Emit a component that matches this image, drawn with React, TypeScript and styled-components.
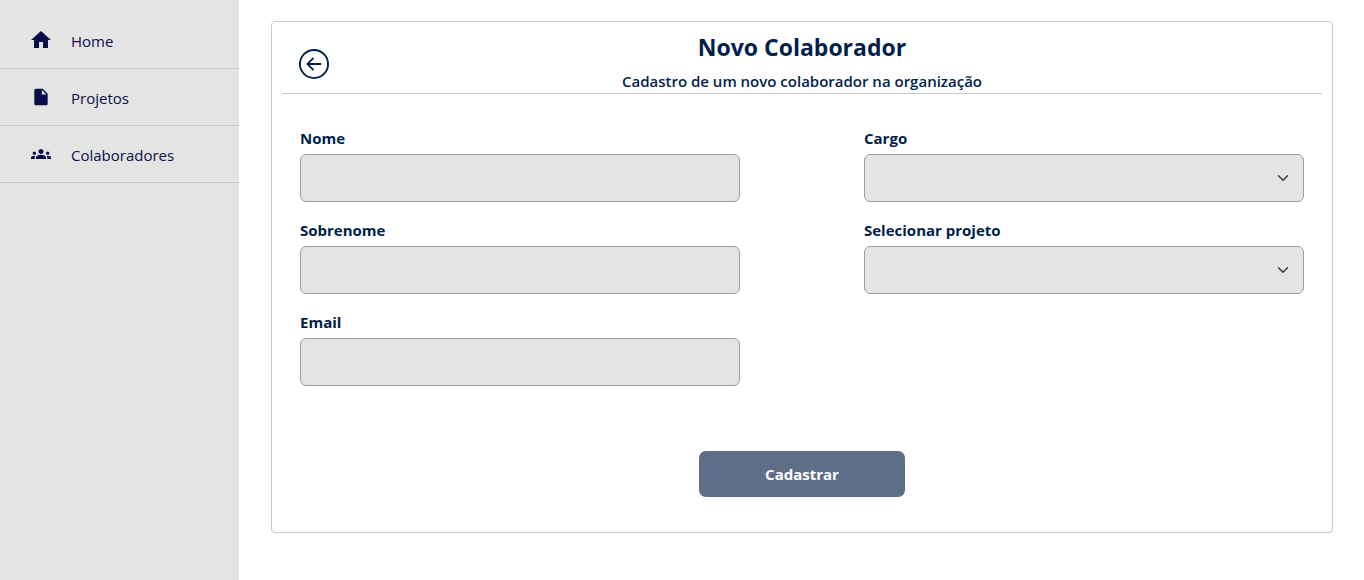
import React from 'react';
import styled, { createGlobalStyle } from 'styled-components';
import { MdHome, MdInsertDriveFile, MdGroups } from 'react-icons/md';
import { BsArrowLeftCircle } from 'react-icons/bs';

const GlobalStyle = createGlobalStyle`
  *, *::before, *::after { box-sizing: border-box; }
  body {
    margin: 0;
    background: #fff;
    color: #001f4c;
    font-family: "Segoe UI", "Open Sans", "Noto Sans", sans-serif;
    font-size: 15px;
    line-height: 24px;
  }
`;

const Page = styled.div`
  display: flex;
  min-height: 100vh;
`;

const Sidebar = styled.nav`
  flex: 0 0 239px;
  padding-top: 12px;
  background: #e4e4e4;
`;

const Menu = styled.ul`
  margin: 0;
  padding: 0;
  list-style: none;
`;

const MenuLink = styled.a`
  display: flex;
  align-items: center;
  gap: 18px;
  height: 57px;
  padding: 0 29px;
  border-bottom: 1px solid #c8c8c8;
  color: #0a0f4a;
  text-decoration: none;
`;

const MenuIcon = styled.span`
  display: flex;
  align-items: center;
  justify-content: center;
  width: 24px;
  height: 24px;
`;

const MenuLabel = styled.span`
  padding-top: 2px;
`;

const Main = styled.main`
  flex: 1;
  min-width: 0;
  padding: 21px 31px 32px 32px;
`;

const Card = styled.section`
  padding: 10px 10px 34px;
  border: 1px solid #c8c8c8;
  border-radius: 4px;
`;

const CardHeader = styled.header`
  display: grid;
  grid-template-columns: 48px 1fr 48px;
  align-items: center;
  border-bottom: 1px solid #c8c8c8;
`;

const BackButton = styled.button`
  display: flex;
  margin-top: 3px;
  padding: 0 0 0 17px;
  border: 0;
  background: none;
  color: #001f4c;
  cursor: pointer;
`;

const Heading = styled.div`
  text-align: center;
`;

const Title = styled.h1`
  margin: 0 0 6px;
  font-size: 23px;
  font-weight: 700;
  line-height: 31px;
`;

const Subtitle = styled.p`
  margin: 0;
  font-weight: 600;
`;

const Form = styled.form`
  padding: 32px 18px 0;
`;

const Columns = styled.div`
  display: grid;
  grid-template-columns: repeat(2, minmax(0, 1fr));
  column-gap: 124px;
`;

const Column = styled.div`
  display: flex;
  flex-direction: column;
  gap: 16px;
`;

const Field = styled.div`
  display: flex;
  flex-direction: column;
  gap: 4px;
`;

const Label = styled.label`
  font-weight: 700;
`;

const Input = styled.input`
  width: 100%;
  height: 48px;
  padding: 6px 12px;
  border: 1px solid #a0a0a0;
  border-radius: 6px;
  background: #e4e4e4;
  color: inherit;
  font: inherit;
`;

const SelectBox = styled.div`
  position: relative;
`;

const Select = styled(Input).attrs({ as: 'select' })`
  display: block;
  appearance: none;
`;

const Chevron = styled.svg`
  position: absolute;
  top: 18px;
  right: 15px;
  pointer-events: none;
`;

const Actions = styled.div`
  display: flex;
  justify-content: center;
  padding-top: 64px;
`;

const SubmitButton = styled.button`
  width: 208px;
  height: 48px;
  border: 1px solid #fff;
  border-radius: 8px;
  background: #5f6e87;
  color: #fff;
  font: inherit;
  font-weight: 700;
  cursor: pointer;
`;

const menuItems = [
  { label: 'Home', icon: <MdHome size={24} /> },
  { label: 'Projetos', icon: <MdInsertDriveFile size={20} /> },
  { label: 'Colaboradores', icon: <MdGroups size={20} /> },
];

function TextField({ id, label, type = 'text' }: { id: string; label: string; type?: string }) {
  return (
    <Field>
      <Label htmlFor={id}>{label}</Label>
      <Input id={id} name={id} type={type} />
    </Field>
  );
}

function SelectField({ id, label }: { id: string; label: string }) {
  return (
    <Field>
      <Label htmlFor={id}>{label}</Label>
      <SelectBox>
        <Select id={id} name={id} />
        <Chevron width="12" height="12" viewBox="0 0 16 16" aria-hidden="true">
          <path
            d="m2 5 6 6 6-6"
            fill="none"
            stroke="#343a40"
            strokeWidth="2"
            strokeLinecap="round"
            strokeLinejoin="round"
          />
        </Chevron>
      </SelectBox>
    </Field>
  );
}

export default function App() {
  return (
    <Page>
      <GlobalStyle />
      <Sidebar>
        <Menu>
          {menuItems.map(({ label, icon }) => (
            <li key={label}>
              <MenuLink href="#">
                <MenuIcon>{icon}</MenuIcon>
                <MenuLabel>{label}</MenuLabel>
              </MenuLink>
            </li>
          ))}
        </Menu>
      </Sidebar>
      <Main>
        <Card>
          <CardHeader>
            <BackButton type="button" aria-label="Voltar">
              <BsArrowLeftCircle size={30} />
            </BackButton>
            <Heading>
              <Title>Novo Colaborador</Title>
              <Subtitle>Cadastro de um novo colaborador na organização</Subtitle>
            </Heading>
          </CardHeader>
          <Form onSubmit={(event) => event.preventDefault()}>
            <Columns>
              <Column>
                <TextField id="nome" label="Nome" />
                <TextField id="sobrenome" label="Sobrenome" />
                <TextField id="email" label="Email" type="email" />
              </Column>
              <Column>
                <SelectField id="cargo" label="Cargo" />
                <SelectField id="projeto" label="Selecionar projeto" />
              </Column>
            </Columns>
            <Actions>
              <SubmitButton type="submit">Cadastrar</SubmitButton>
            </Actions>
          </Form>
        </Card>
      </Main>
    </Page>
  );
}
